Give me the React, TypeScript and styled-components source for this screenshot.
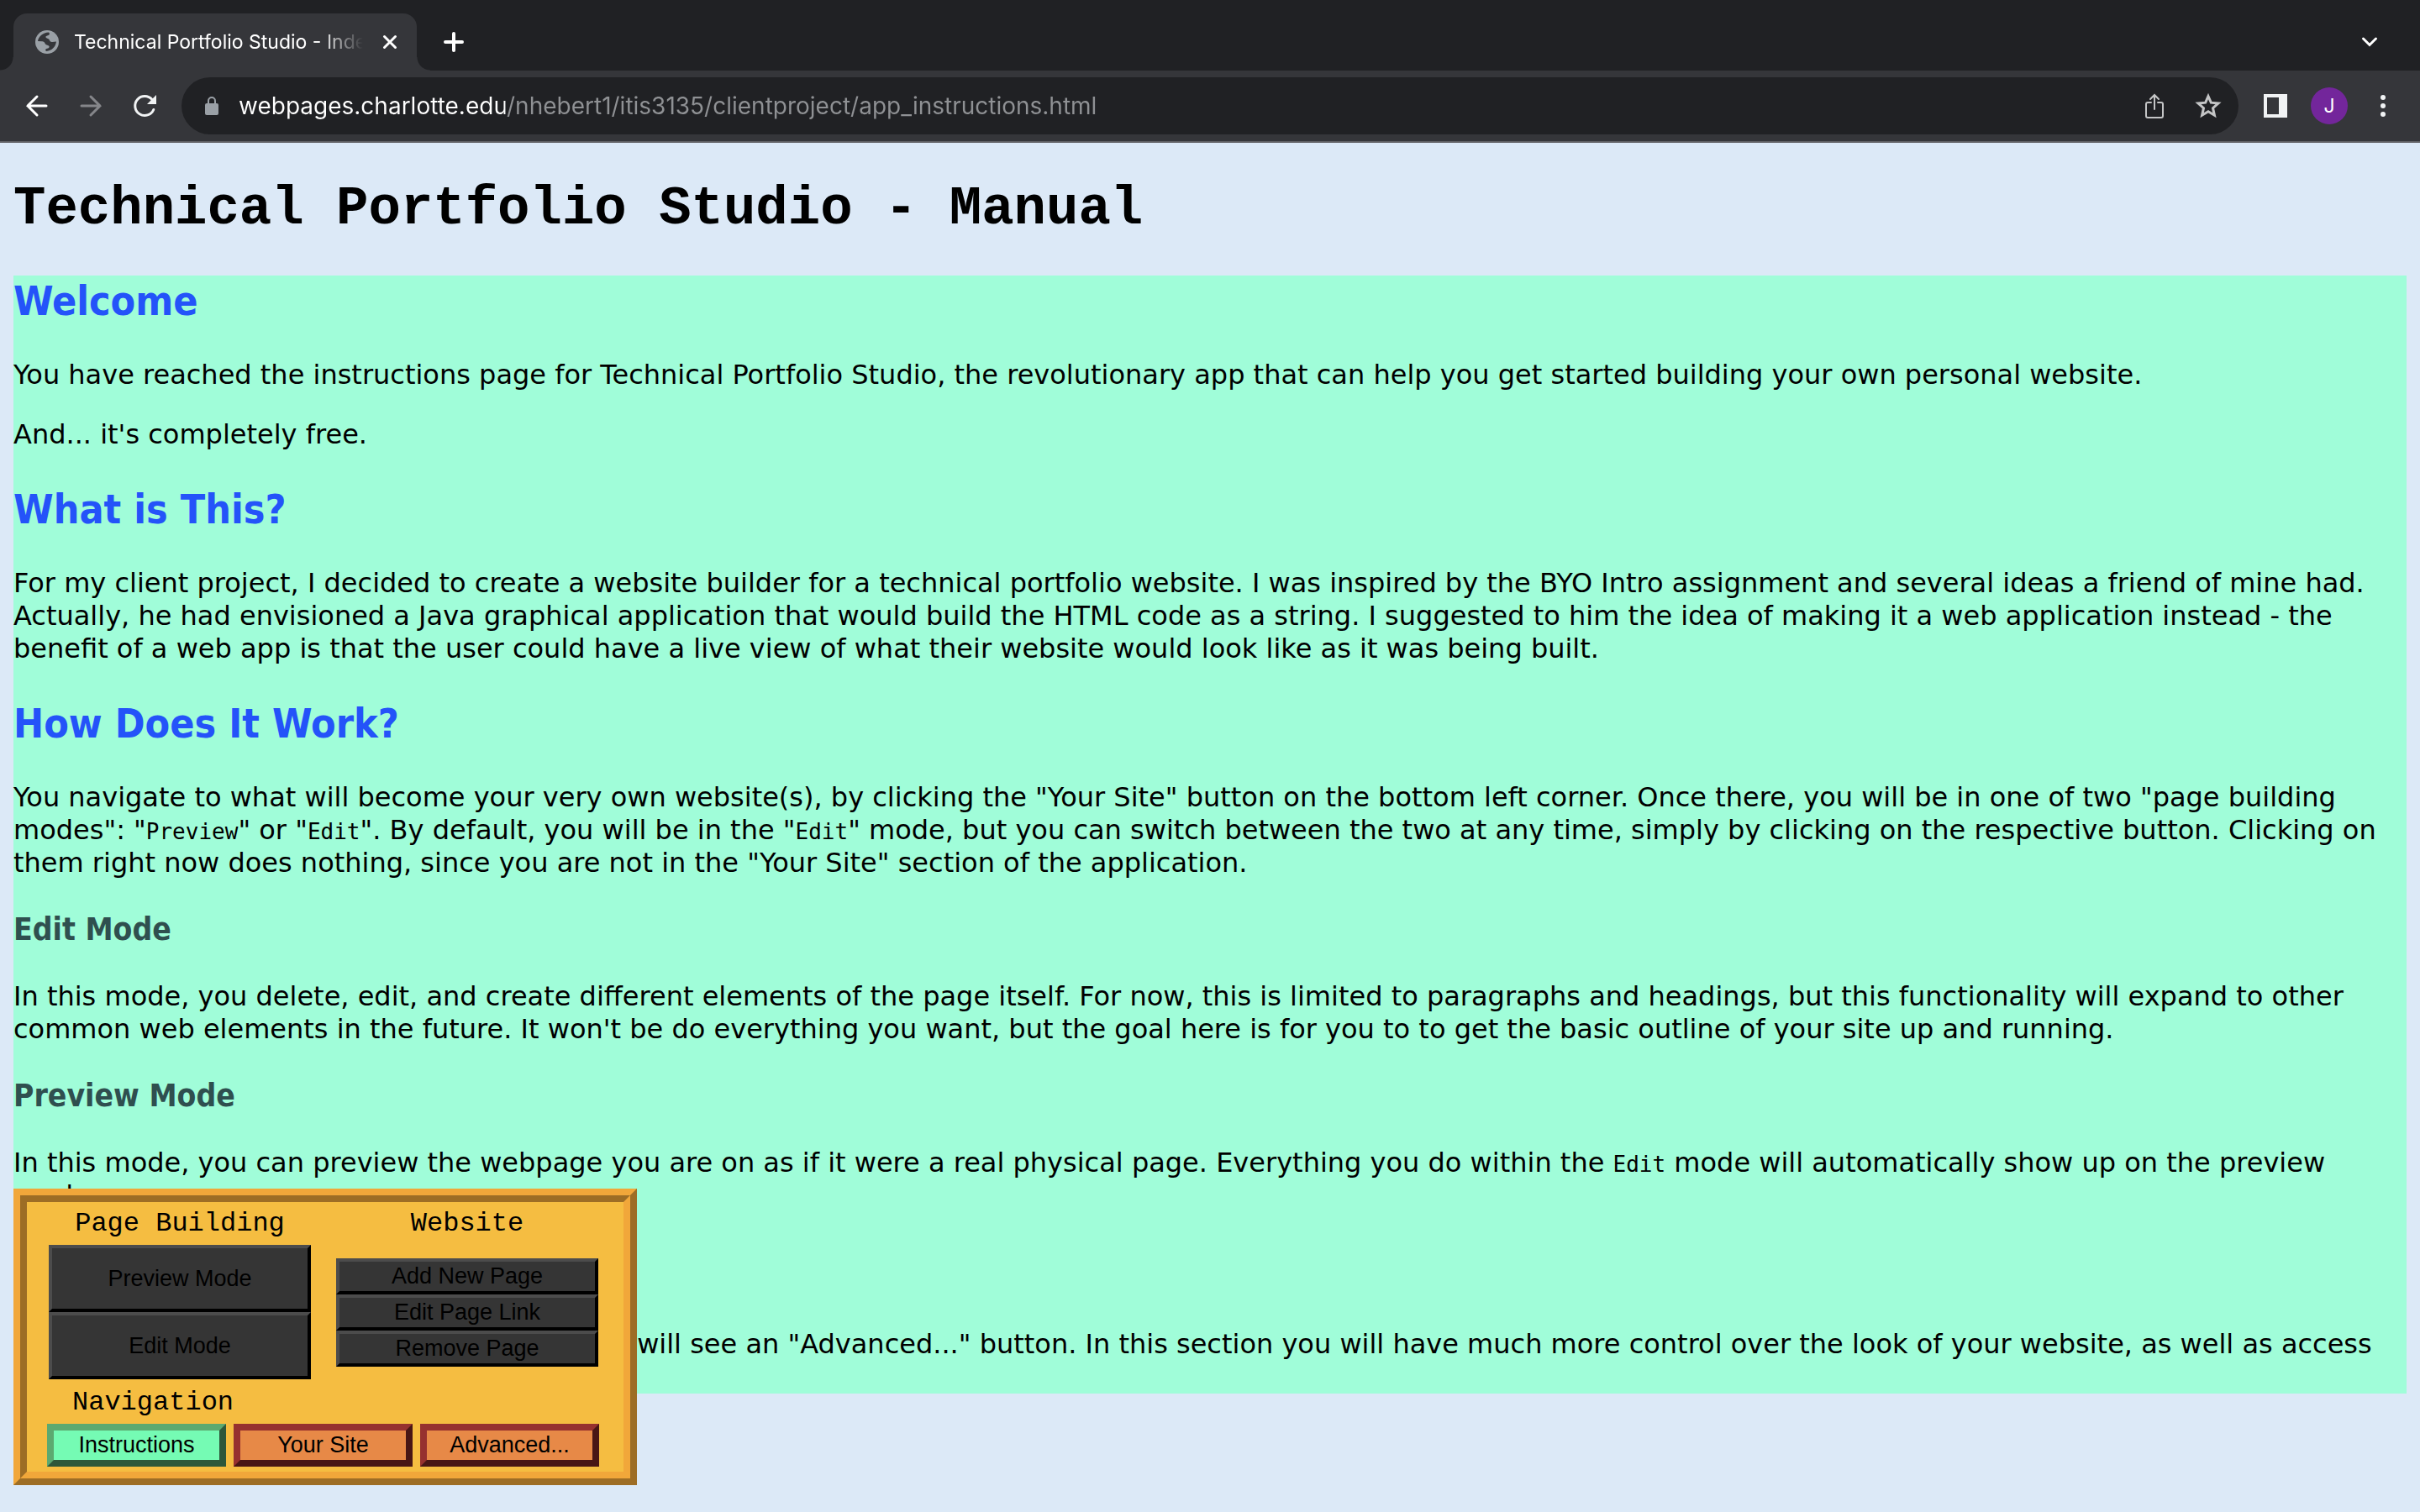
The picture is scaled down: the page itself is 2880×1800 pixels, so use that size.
import React from "react";
import styled, { createGlobalStyle, css } from "styled-components";

const GlobalStyle = createGlobalStyle`
  * { box-sizing: border-box; }
  body {
    margin: 0;
    background: #dce9f7;
    color: #000;
    font-family: "DejaVu Sans", Verdana, sans-serif;
    font-size: 32px;
    line-height: 39px;
  }
`;

/* ---------- browser frame ---------- */

const TabStrip = styled.div`
  display: flex;
  align-items: flex-end;
  height: 84px;
  padding: 0 40px 0 16px;
  background: #202124;
  font-family: Inter, Roboto, sans-serif;
`;

const Tab = styled.div`
  position: relative;
  display: flex;
  align-items: center;
  width: 480px;
  height: 68px;
  padding: 0 20px 0 24px;
  border-radius: 16px 16px 0 0;
  background: #35363a;

  &::before,
  &::after {
    content: "";
    position: absolute;
    bottom: 0;
    width: 16px;
    height: 16px;
  }
  &::before {
    left: -16px;
    background: radial-gradient(circle at 0 0, transparent 15px, #35363a 16px);
  }
  &::after {
    right: -16px;
    background: radial-gradient(circle at 100% 0, transparent 15px, #35363a 16px);
  }
`;

const TabTitle = styled.div`
  flex: 1;
  margin: 0 20px 0 16px;
  overflow: hidden;
  white-space: nowrap;
  color: #fff;
  font-size: 23px;
  line-height: 32px;
  mask-image: linear-gradient(90deg, #000 calc(100% - 52px), transparent);
`;

const IconButton = styled.button<{ $size?: number }>`
  display: flex;
  align-items: center;
  justify-content: center;
  flex: none;
  width: ${(p) => p.$size ?? 64}px;
  height: ${(p) => p.$size ?? 64}px;
  padding: 0;
  border: 0;
  background: none;
`;

const StripActions = styled.div`
  display: flex;
  flex: 1;
  align-items: center;
  justify-content: space-between;
  height: 68px;
  padding-left: 12px;
`;

const Toolbar = styled.div`
  display: flex;
  align-items: center;
  height: 86px;
  padding: 0 12px;
  border-bottom: 2px solid #606165;
  background: #35363a;
  font-family: Inter, Roboto, sans-serif;
`;

const AddressBar = styled.div`
  display: flex;
  flex: 1;
  align-items: center;
  height: 68px;
  margin: 0 26px 0 12px;
  padding: 0 4px 0 28px;
  border-radius: 34px;
  background: #202124;
`;

const AddressInput = styled.input`
  flex: 1;
  min-width: 0;
  margin-left: 24px;
  padding: 0;
  border: 0;
  outline: 0;
  font-family: inherit;
  font-size: 28px;
  line-height: 40px;
  color: #fff;
  background: linear-gradient(90deg, #fff 317px, #8f9194 317px);
  -webkit-background-clip: text;
  background-clip: text;
  -webkit-text-fill-color: transparent;
`;

const TrailingActions = styled.div`
  display: flex;
  align-items: center;
`;

const Avatar = styled.button`
  width: 44px;
  height: 44px;
  margin: 0 10px 0 24px;
  padding: 0;
  border: 0;
  border-radius: 50%;
  background: #73269b;
  color: #fff;
  font-family: inherit;
  font-size: 23px;
  line-height: 44px;
`;

type LineProps = { w: number; h: number; d: string; color?: string; sw?: number; cap?: "round" | "butt" };

const Line = ({ w, h, d, color = "#fff", sw = 3, cap = "round" }: LineProps) => (
  <svg
    width={w}
    height={h}
    viewBox={`0 0 ${w} ${h}`}
    fill="none"
    stroke={color}
    strokeWidth={sw}
    strokeLinecap={cap}
    aria-hidden="true"
  >
    <path d={d} />
  </svg>
);

function BrowserFrame() {
  return (
    <header>
      <TabStrip>
        <Tab>
          <svg width="32" height="32" viewBox="0 0 32 32" aria-hidden="true">
            <circle cx="16" cy="16" r="14" fill="#9aa0a6" />
            <path
              d="M5 15C6 9 11 5 18 4.500c1.500 1 1 3-.5 3.500-2 .5-3.500 1-3 2.500.8 1.500 3 1 4 2.500l1 2c1.500 1.500 4 1 7.500.5-1 6.500-5 10.500-12 11.500-1.500-1-1-3 1-3.200 2-.3 3-1.300 2.500-2.800-.7-1.500-3.500-1-4.500-2.500-.7-1.500-1-3-3.500-3.300z"
              fill="#35363a"
            />
          </svg>
          <TabTitle>Technical Portfolio Studio - Index</TabTitle>
          <IconButton $size={24} aria-label="Close tab">
            <Line w={24} h={24} d="M5.500 5.500l13 13M18.500 5.500l-13 13" />
          </IconButton>
        </Tab>
        <StripActions>
          <IconButton aria-label="New tab">
            <Line w={28} h={28} sw={4} d="M14 4v20M4 14h20" />
          </IconButton>
          <IconButton $size={40} aria-label="Search tabs">
            <Line w={24} h={24} d="M4.500 8l7.500 7.500L19.500 8" />
          </IconButton>
        </StripActions>
      </TabStrip>
      <Toolbar>
        <IconButton aria-label="Back">
          <Line w={32} h={32} d="M27 16H5M16 5L5 16l11 11" />
        </IconButton>
        <IconButton aria-label="Forward">
          <Line w={32} h={32} color="#85868a" d="M5 16h22M16 5l11 11-11 11" />
        </IconButton>
        <IconButton aria-label="Reload">
          <svg width="32" height="32" viewBox="0 0 32 32" aria-hidden="true">
            <path
              d="M26.800 20.500A11.500 11.500 0 1 1 25 8.500"
              fill="none"
              stroke="#f1f3f4"
              strokeWidth="3"
              strokeLinecap="round"
            />
            <path d="M30 3v11H19z" fill="#f1f3f4" />
          </svg>
        </IconButton>
        <AddressBar>
          <svg width="16" height="22" viewBox="0 0 16 22" aria-hidden="true">
            <rect x="0" y="8" width="16" height="14" rx="2" fill="#9aa0a6" />
            <path d="M4 9V5a4 4 0 0 1 8 0v4" fill="none" stroke="#9aa0a6" strokeWidth="2" />
          </svg>
          <AddressInput
            aria-label="Address"
            defaultValue="webpages.charlotte.edu/nhebert1/itis3135/clientproject/app_instructions.html"
          />
          <IconButton aria-label="Share">
            <Line
              w={32}
              h={32}
              sw={2}
              color="#c4c5c6"
              d="M12 12H8a2 2 0 0 0-2 2v14a2 2 0 0 0 2 2h16a2 2 0 0 0 2-2V14a2 2 0 0 0-2-2h-4M16 20V3M11 8l5-5 5 5"
            />
          </IconButton>
          <IconButton aria-label="Bookmark this page">
            <Line
              w={32}
              h={32}
              cap="butt"
              color="#c4c5c6"
              d="M16 4.500l3.300 7.700 8.700.7-6.500 5.800 1.900 8.500L16 22.700l-7.400 4.500 1.900-8.500L4 12.900l8.700-.7z"
            />
          </IconButton>
        </AddressBar>
        <TrailingActions>
          <IconButton $size={36} aria-label="Side panel">
            <svg width="28" height="28" viewBox="0 0 28 28" aria-hidden="true">
              <path d="M0 0h28v28H0zM4 4v20h14V4z" fill="#f1f3f4" fillRule="evenodd" />
            </svg>
          </IconButton>
          <Avatar aria-label="Profile">J</Avatar>
          <IconButton aria-label="Menu">
            <svg width="8" height="32" viewBox="0 0 8 32" fill="#f1f3f4" aria-hidden="true">
              <circle cx="4" cy="6" r="3" />
              <circle cx="4" cy="16" r="3" />
              <circle cx="4" cy="26" r="3" />
            </svg>
          </IconButton>
        </TrailingActions>
      </Toolbar>
    </header>
  );
}

/* ---------- manual ---------- */

const Page = styled.main`
  padding: 0 16px;
`;

const PageTitle = styled.h1`
  margin: 43px 0;
  font: bold 64px/72px "Liberation Mono", "Courier New", monospace;
`;

const Manual = styled.article`
  background: #a0fdd9;
`;

const headingFont = css`
  font-family: "DejaVu Sans Condensed", Tahoma, "DejaVu Sans", sans-serif;
`;

const SectionTitle = styled.h2`
  ${headingFont}
  margin: 39px 0;
  color: #2453f9;
  font-size: 48px;
  line-height: 60px;
`;

const ModeTitle = styled.h3`
  ${headingFont}
  margin: 36px 0 37px;
  color: #2f4f4f;
  font-size: 37px;
  line-height: 47px;
`;

const Text = styled.p`
  margin: 0 0 32px;
`;

const Code = styled.code`
  font-family: "DejaVu Sans Mono", Menlo, monospace;
  font-size: 26px;
  line-height: 1;
`;

/* ---------- control panel ---------- */

const Panel = styled.aside`
  position: fixed;
  left: 16px;
  bottom: 32px;
  width: 742px;
  padding-bottom: 6px;
  border: 16px ridge #f1a73a;
  background: #f5bd41;
`;

const Groups = styled.div`
  display: grid;
  grid-template-columns: 1fr 1fr;
  column-gap: 30px;
  padding: 0 30px 0 26px;
`;

const Group = styled.section`
  display: flex;
  flex-direction: column;
`;

const labelText = css`
  font: 32px/51px "Liberation Mono", "Courier New", monospace;
`;

const GroupLabel = styled.div`
  ${labelText}
  text-align: center;
`;

const ButtonStack = styled.div`
  display: flex;
  flex: 1;
  flex-direction: column;
  justify-content: center;
`;

const buttonText = css`
  padding: 0;
  border-style: solid;
  color: #000;
  font: 27px/35px "Liberation Sans", Arial, sans-serif;
`;

const ToolButton = styled.button<{ $tall?: boolean }>`
  ${buttonText}
  height: ${(p) => (p.$tall ? 80 : 43)}px;
  border-width: 4px;
  border-color: #4c4c4c #000 #000 #4c4c4c;
  background: #353535;
`;

const Nav = styled.nav`
  padding: 2px 29px 0 24px;
`;

const NavLabel = styled.div`
  ${labelText}
  padding-left: 30px;
`;

const NavButtons = styled.div`
  display: grid;
  grid-template-columns: repeat(3, 1fr);
  column-gap: 9px;
`;

const NavButton = styled.button<{ $current?: boolean }>`
  ${buttonText}
  height: 51px;
  border-width: 8px;
  border-color: ${(p) => (p.$current ? "#5ca970 #2d573a #2d573a #5ca970" : "#96312f #481615 #481615 #96312f")};
  background: ${(p) => (p.$current ? "#75fbb4" : "#e78947")};
`;

function ControlPanel() {
  return (
    <Panel>
      <Groups>
        <Group>
          <GroupLabel>Page Building</GroupLabel>
          <ButtonStack>
            <ToolButton $tall>Preview Mode</ToolButton>
            <ToolButton $tall>Edit Mode</ToolButton>
          </ButtonStack>
        </Group>
        <Group>
          <GroupLabel>Website</GroupLabel>
          <ButtonStack>
            <ToolButton>Add New Page</ToolButton>
            <ToolButton>Edit Page Link</ToolButton>
            <ToolButton>Remove Page</ToolButton>
          </ButtonStack>
        </Group>
      </Groups>
      <Nav>
        <NavLabel>Navigation</NavLabel>
        <NavButtons>
          <NavButton $current>Instructions</NavButton>
          <NavButton>Your Site</NavButton>
          <NavButton>Advanced...</NavButton>
        </NavButtons>
      </Nav>
    </Panel>
  );
}

export default function App() {
  return (
    <>
      <GlobalStyle />
      <BrowserFrame />
      <Page>
        <PageTitle>Technical Portfolio Studio - Manual</PageTitle>
        <Manual>
          <SectionTitle>Welcome</SectionTitle>
          <Text>
            You have reached the instructions page for Technical Portfolio Studio, the revolutionary app that can help
            you get started building your own personal website.
          </Text>
          <Text>And... it's completely free.</Text>
          <SectionTitle>What is This?</SectionTitle>
          <Text>
            For my client project, I decided to create a website builder for a technical portfolio website. I was
            inspired by the BYO Intro assignment and several ideas a friend of mine had. Actually, he had envisioned a
            Java graphical application that would build the HTML code as a string. I suggested to him the idea of
            making it a web application instead - the benefit of a web app is that the user could have a live view of
            what their website would look like as it was being built.
          </Text>
          <SectionTitle>How Does It Work?</SectionTitle>
          <Text>
            You navigate to what will become your very own website(s), by clicking the "Your Site" button on the bottom
            left corner. Once there, you will be in one of two "page building modes": "<Code>Preview</Code>" or "
            <Code>Edit</Code>". By default, you will be in the "<Code>Edit</Code>" mode, but you can switch between the
            two at any time, simply by clicking on the respective button. Clicking on them right now does nothing,
            since you are not in the "Your Site" section of the application.
          </Text>
          <ModeTitle>Edit Mode</ModeTitle>
          <Text>
            In this mode, you delete, edit, and create different elements of the page itself. For now, this is limited
            to paragraphs and headings, but this functionality will expand to other common web elements in the future.
            It won't be do everything you want, but the goal here is for you to to get the basic outline of your site
            up and running.
          </Text>
          <ModeTitle>Preview Mode</ModeTitle>
          <Text>
            In this mode, you can preview the webpage you are on as if it were a real physical page. Everything you do
            within the <Code>Edit</Code> mode will automatically show up on the preview mode.
          </Text>
          <SectionTitle>Advanced</SectionTitle>
          <Text>
            On the bottom left corner of this website, you will see an "Advanced..." button. In this section you will
            have much more control over the look of your website, as well as access additional options.
          </Text>
        </Manual>
      </Page>
      <ControlPanel />
    </>
  );
}
